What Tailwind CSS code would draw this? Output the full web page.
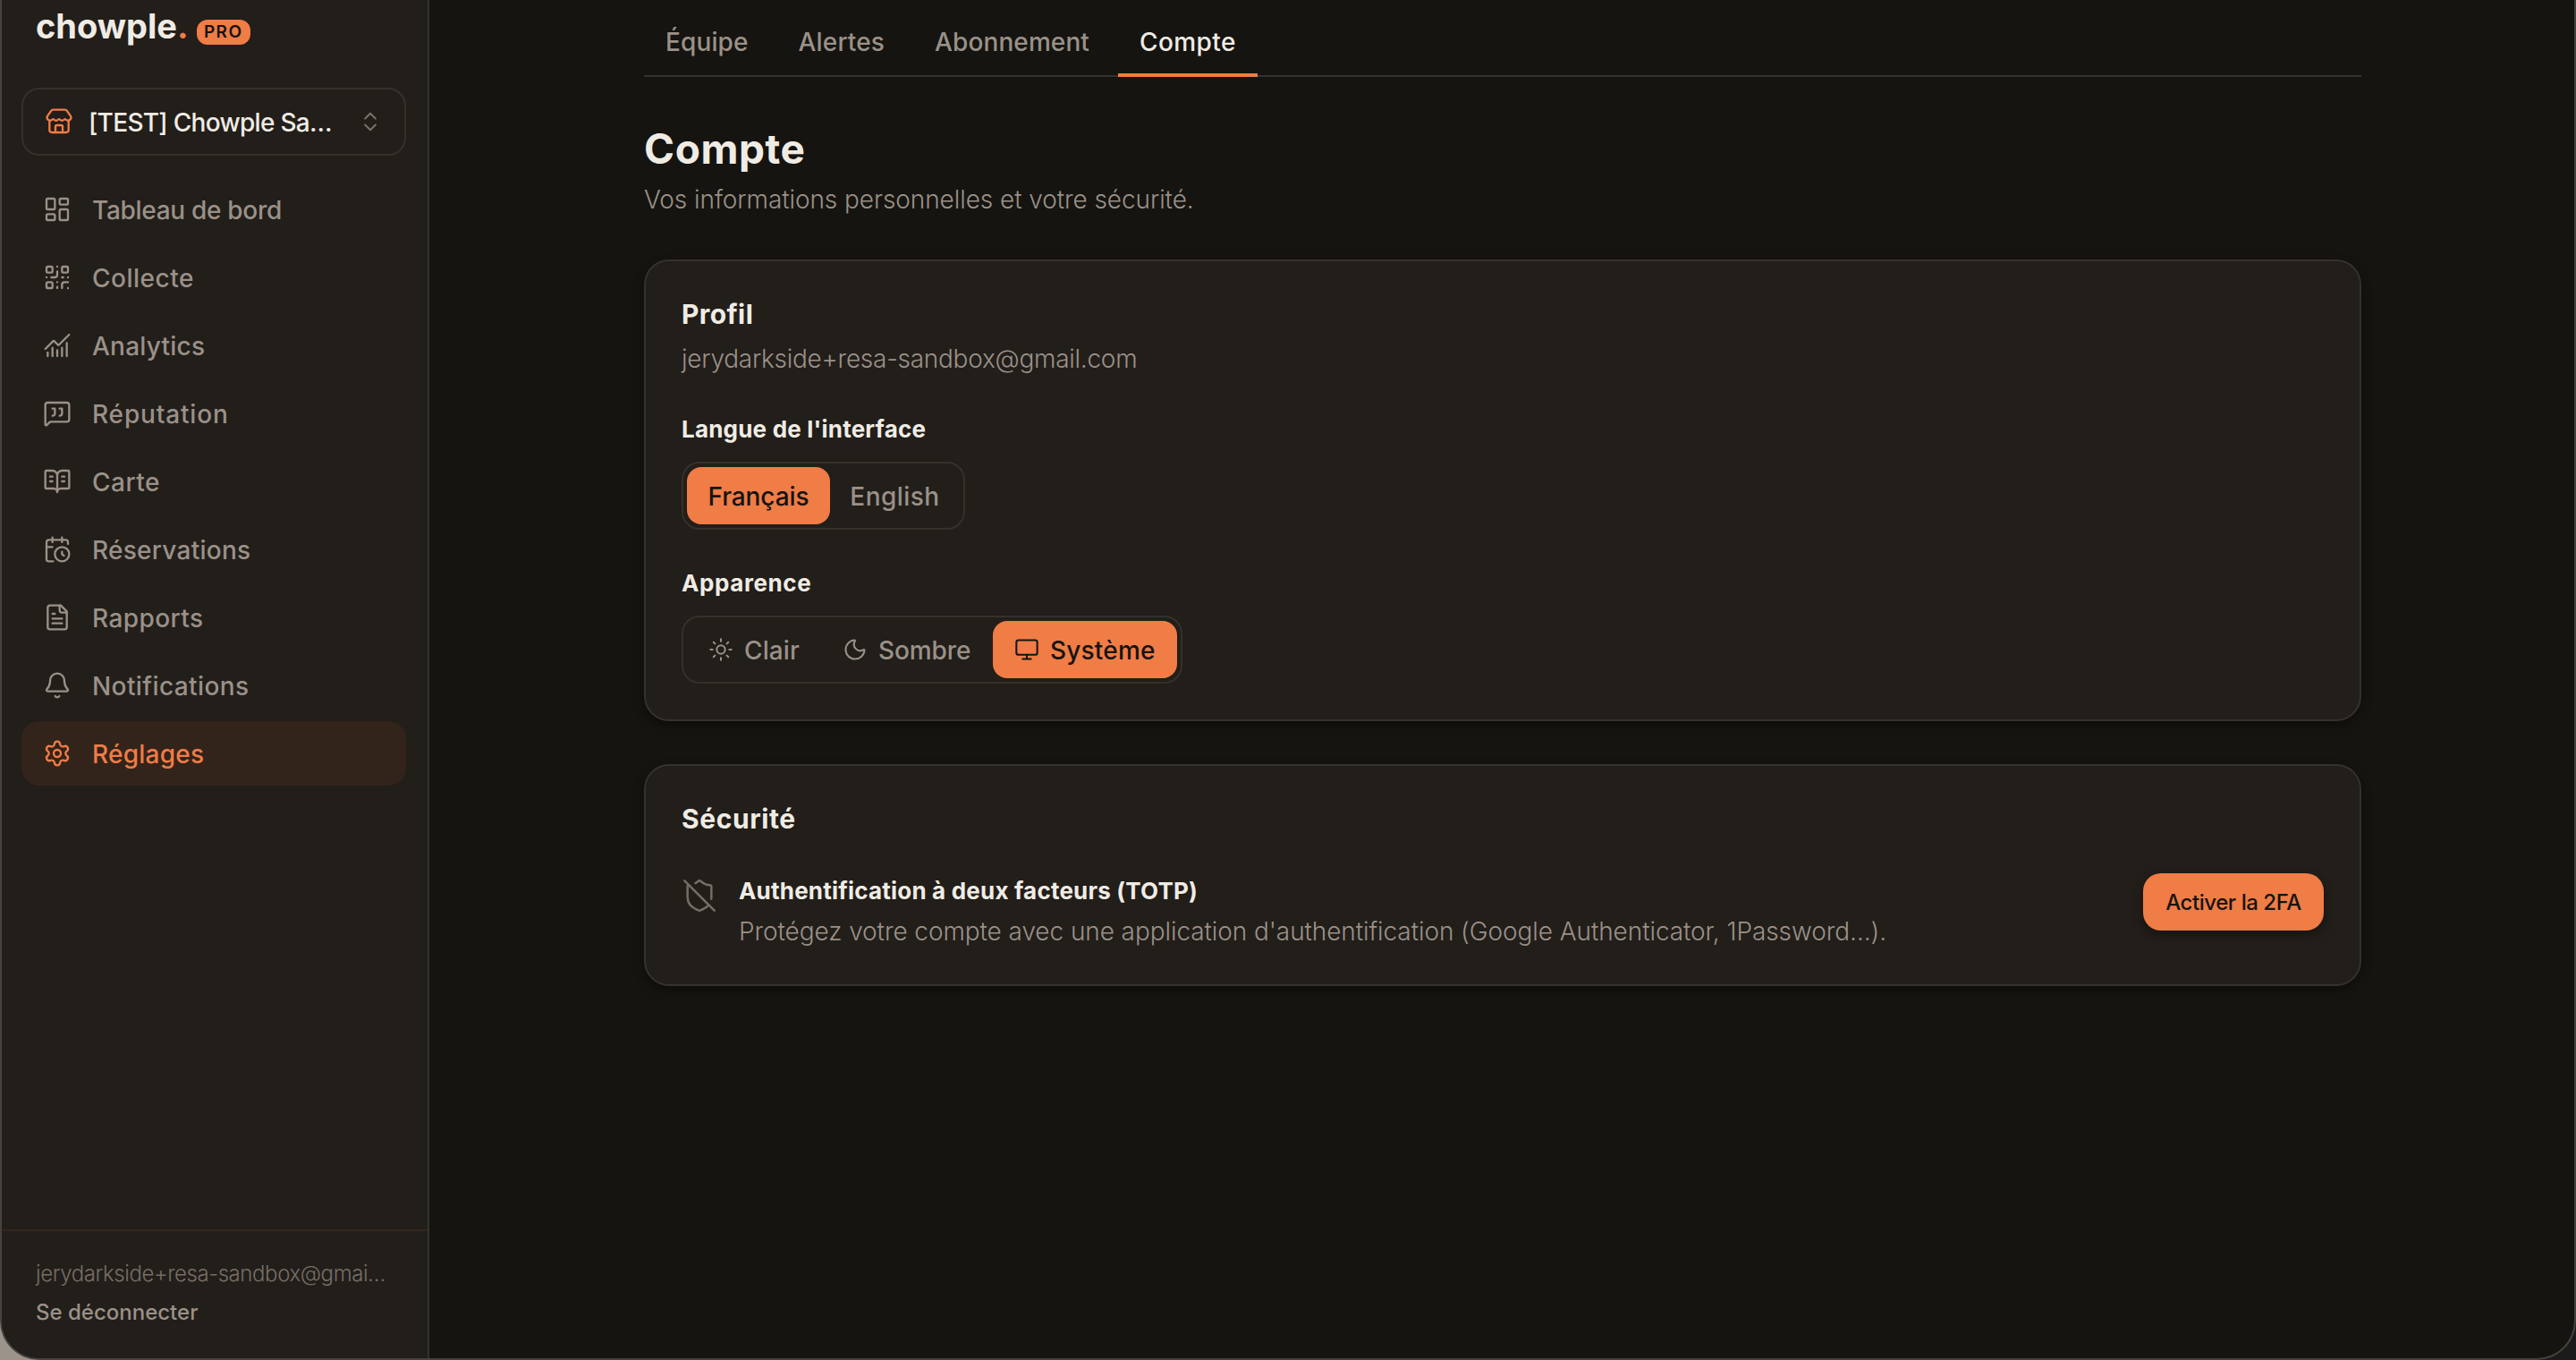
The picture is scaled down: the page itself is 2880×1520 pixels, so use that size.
<!DOCTYPE html>
<html lang="fr">
<head>
<meta charset="utf-8">
<title>Chowple Pro – Compte</title>
<script src="https://cdn.jsdelivr.net/npm/@tailwindcss/browser@4"></script>
</head>
<body class="h-[1520px] w-[2880px] overflow-hidden bg-linear-to-r from-[#9c948b] from-50% to-[#1b1b1c] to-50% font-['Inter',sans-serif] text-[28px] leading-[40px] font-medium text-[#9a9188]">
<div class="flex h-full overflow-hidden rounded-b-[44px] border-x-2 border-b-2 border-[#45423d] bg-[#151410]">

  <aside class="flex w-[478px] shrink-0 flex-col border-r-2 border-[#35322d] bg-[#221e1a]">
    <div class="flex h-[98px] pl-[38px]">
      <div class="mt-[5px] h-[48px] text-[38px] leading-[48px] font-bold text-[#f0ece4]">chowple<span class="text-[#f07c46]">.</span></div>
      <div class="mt-[22px] ml-[9px] flex h-[28px] w-[60px] items-center justify-center rounded-[12px] bg-[#f07c46] text-[19px] font-semibold text-[#151410]"><span class="tracking-[1.4px]">PRO</span></div>
    </div>
    <div class="mr-[24px] ml-[22px] flex h-[76px] items-center rounded-[20px] border-2 border-[#36302b] pr-[24px] pl-[24px]">
      <svg class="size-[32px]" viewBox="0 0 24 24" fill="none" stroke="#f07c46" stroke-width="1.75" stroke-linecap="round" stroke-linejoin="round"><path d="M15 21v-5a1 1 0 0 0-1-1h-4a1 1 0 0 0-1 1v5"/><path d="M17.774 10.31a1.12 1.12 0 0 0-1.549 0 2.5 2.5 0 0 1-3.451 0 1.12 1.12 0 0 0-1.548 0 2.5 2.5 0 0 1-3.452 0 1.12 1.12 0 0 0-1.549 0 2.5 2.5 0 0 1-3.77-3.248l2.889-4.184A2 2 0 0 1 7 2h10a2 2 0 0 1 1.653.873l2.895 4.192a2.5 2.5 0 0 1-3.774 3.244"/><path d="M4 10.95V19a2 2 0 0 0 2 2h12a2 2 0 0 0 2-2v-8.05"/></svg>
      <span class="ml-[17px] pt-[2px] tracking-[-0.7px] whitespace-nowrap text-[#f0ece4]">[TEST] Chowple Sa…</span>
      <svg class="ml-auto size-[28px] shrink-0" viewBox="0 0 24 24" fill="none" stroke="#7a7268" stroke-width="1.75" stroke-linecap="round" stroke-linejoin="round"><path d="m7 15 5 5 5-5"/><path d="m7 9 5-5 5 5"/></svg>
    </div>
    <nav class="mt-[24px] mr-[24px] ml-[22px] flex flex-col gap-1 [&_span]:-ml-px [&_span]:pt-[2px] [&_svg]:size-[32px] [&>a]:flex [&>a]:h-[72px] [&>a]:items-center [&>a]:gap-6 [&>a]:rounded-[20px] [&>a]:px-6">
      <a><svg viewBox="0 0 24 24" fill="none" stroke="currentColor" stroke-width="1.75" stroke-linecap="round" stroke-linejoin="round"><rect width="7" height="9" x="3" y="3" rx="1"/><rect width="7" height="5" x="14" y="3" rx="1"/><rect width="7" height="9" x="14" y="12" rx="1"/><rect width="7" height="5" x="3" y="16" rx="1"/></svg><span class="tracking-[-0.3px]">Tableau de bord</span></a>
      <a><svg viewBox="0 0 24 24" fill="none" stroke="currentColor" stroke-width="1.75" stroke-linecap="round" stroke-linejoin="round"><rect width="5" height="5" x="3" y="3" rx="1"/><rect width="5" height="5" x="16" y="3" rx="1"/><rect width="5" height="5" x="3" y="16" rx="1"/><path d="M21 16h-3a2 2 0 0 0-2 2v3M21 21v.01M12 7v3a2 2 0 0 1-2 2H7M3 12h.01M12 3h.01M12 16v.01M16 12h1M21 12v.01M12 21v-1"/></svg><span class="tracking-[0.51px]">Collecte</span></a>
      <a><svg viewBox="0 0 24 24" fill="none" stroke="currentColor" stroke-width="1.75" stroke-linecap="round" stroke-linejoin="round"><path d="M12 16v5M16 14v7M20 10v11M4 18v3M8 14v7"/><path d="m22 3-8.646 8.646a.5.5 0 0 1-.708 0L9.354 8.354a.5.5 0 0 0-.707 0L2 15"/></svg><span class="tracking-[0.23px]">Analytics</span></a>
      <a><svg viewBox="0 0 24 24" fill="none" stroke="currentColor" stroke-width="1.75" stroke-linecap="round" stroke-linejoin="round"><path d="M14 14a2 2 0 0 0 2-2V8h-2"/><path d="M22 17a2 2 0 0 1-2 2H6.828a2 2 0 0 0-1.414.586l-2.202 2.202A.71.71 0 0 1 2 21.286V5a2 2 0 0 1 2-2h16a2 2 0 0 1 2 2z"/><path d="M8 14a2 2 0 0 0 2-2V8H8"/></svg><span class="tracking-[0.84px]">Réputation</span></a>
      <a><svg viewBox="0 0 24 24" fill="none" stroke="currentColor" stroke-width="1.75" stroke-linecap="round" stroke-linejoin="round"><path d="M12 7v14M16 12h2M16 8h2M6 12h2M6 8h2"/><path d="M3 18a1 1 0 0 1-1-1V4a1 1 0 0 1 1-1h5a4 4 0 0 1 4 4 4 4 0 0 1 4-4h5a1 1 0 0 1 1 1v13a1 1 0 0 1-1 1h-6a3 3 0 0 0-3 3 3 3 0 0 0-3-3z"/></svg><span class="tracking-[0.5px]">Carte</span></a>
      <a><svg viewBox="0 0 24 24" fill="none" stroke="currentColor" stroke-width="1.75" stroke-linecap="round" stroke-linejoin="round"><path d="M16 14v2.2l1.6 1M16 2v4M3 10h5M8 2v4"/><path d="M21 7.5V6a2 2 0 0 0-2-2H5a2 2 0 0 0-2 2v14a2 2 0 0 0 2 2h3.5"/><circle cx="16" cy="16" r="6"/></svg><span class="tracking-[0.26px]">Réservations</span></a>
      <a><svg viewBox="0 0 24 24" fill="none" stroke="currentColor" stroke-width="1.75" stroke-linecap="round" stroke-linejoin="round"><path d="M15 2H6a2 2 0 0 0-2 2v16a2 2 0 0 0 2 2h12a2 2 0 0 0 2-2V7Z"/><path d="M14 2v4a2 2 0 0 0 2 2h4M10 9H8M16 13H8M16 17H8"/></svg><span class="tracking-[0.42px]">Rapports</span></a>
      <a><svg viewBox="0 0 24 24" fill="none" stroke="currentColor" stroke-width="1.75" stroke-linecap="round" stroke-linejoin="round"><path d="M10.268 21a2 2 0 0 0 3.464 0"/><path d="M3.262 15.326A1 1 0 0 0 4 17h16a1 1 0 0 0 .74-1.673C19.41 13.956 18 12.499 18 8A6 6 0 0 0 6 8c0 4.499-1.411 5.956-2.738 7.326"/></svg><span class="tracking-[0.41px]">Notifications</span></a>
      <a class="bg-[#33241b] text-[#f07c46]"><svg viewBox="0 0 24 24" fill="none" stroke="currentColor" stroke-width="1.75" stroke-linecap="round" stroke-linejoin="round"><path d="M9.671 4.136a2.34 2.34 0 0 1 4.659 0 2.34 2.34 0 0 0 3.319 1.915 2.34 2.34 0 0 1 2.33 4.033 2.34 2.34 0 0 0 0 3.831 2.34 2.34 0 0 1-2.33 4.033 2.34 2.34 0 0 0-3.319 1.915 2.34 2.34 0 0 1-4.659 0 2.34 2.34 0 0 0-3.32-1.915 2.34 2.34 0 0 1-2.33-4.033 2.34 2.34 0 0 0 0-3.831A2.34 2.34 0 0 1 6.35 6.051a2.34 2.34 0 0 0 3.319-1.915"/><circle cx="12" cy="12" r="3"/></svg><span class="tracking-[0.24px]">Réglages</span></a>
    </nav>
    <div class="mt-auto h-[144px] border-t-2 border-[#35251f] pt-[30px] pl-[38px] text-[24px] leading-[36px]">
      <div class="font-light tracking-[-0.42px] whitespace-nowrap text-[#766e65]">jerydarkside+resa-sandbox@gmai…</div>
      <div class="mt-[7px]">Se déconnecter</div>
    </div>
  </aside>

  <main class="flex-1 pl-[240px]">
   <div class="w-[1920px]">
    <nav class="flex h-[86px] items-end gap-2 border-b-2 border-[#35322d] [&>a]:-mb-[2px] [&>a]:flex [&>a]:h-[78px] [&>a]:items-center [&>a]:border-b-4 [&>a]:px-6 [&>a]:pt-1">
      <a class="border-transparent"><span class="tracking-[0.12px]">Équipe</span></a>
      <a class="border-transparent"><span class="tracking-[0.15px]">Alertes</span></a>
      <a class="border-transparent"><span class="tracking-[0.1px]">Abonnement</span></a>
      <a class="border-[#f07c46] text-[#f0ece4]"><span class="tracking-[0.42px]">Compte</span></a>
    </nav>
    <h1 class="mt-[54px] h-[52px] text-[46px] leading-[52px] font-bold tracking-[0.6px] text-[#f0ece4]">Compte</h1>
    <p class="mt-[11px] font-light tracking-[-0.08px]">Vos informations personnelles et votre sécurité.</p>

    <section class="mt-[47px] h-[516px] rounded-[28px] border-2 border-[#36312c] bg-[#221e1a] p-10 shadow-[0_4px_12px_rgba(0,0,0,0.4)]">
      <h2 class="text-[30px] leading-[38px] font-bold tracking-[0.4px] text-[#f0ece4]">Profil</h2>
      <p class="mt-[11px] font-light tracking-[-0.27px]">jerydarkside+resa-sandbox@gmail.com</p>
      <h3 class="mt-[41px] text-[26px] leading-[36px] font-bold tracking-[0.2px] text-[#f0ece4]">Langue de l'interface</h3>
      <div class="mt-[18px] flex h-[76px] w-[317px] rounded-[20px] border-2 border-[#36302b] p-1 [&_span]:pt-[2px]">
        <div class="flex w-[160px] items-center justify-center rounded-[16px] bg-[#f07c46] text-[#151410]"><span class="tracking-[-0.09px]">Français</span></div>
        <div class="flex flex-1 items-center justify-center"><span class="tracking-[0.46px]">English</span></div>
      </div>
      <h3 class="mt-[42px] text-[26px] leading-[36px] font-bold tracking-[0.6px] text-[#f0ece4]">Apparence</h3>
      <div class="mt-[18px] flex h-[76px] w-[560px] rounded-[20px] border-2 border-[#36302b] p-1 [&_span]:pt-[2px] [&_svg]:size-[28px] [&_svg]:shrink-0 [&>div]:flex [&>div]:items-center [&>div]:gap-3 [&>div]:pl-6">
        <div class="w-[150px]"><svg viewBox="0 0 24 24" fill="none" stroke="currentColor" stroke-width="1.75" stroke-linecap="round" stroke-linejoin="round"><circle cx="12" cy="12" r="4"/><path d="M12 2v2M12 20v2M4.93 4.93l1.41 1.41M17.66 17.66l1.41 1.41M2 12h2M20 12h2M6.34 17.66l-1.41 1.41M19.07 4.93l-1.41 1.41"/></svg><span class="tracking-[0.11px]">Clair</span></div>
        <div class="w-[192px]"><svg viewBox="0 0 24 24" fill="none" stroke="currentColor" stroke-width="1.75" stroke-linecap="round" stroke-linejoin="round"><path d="M20.985 12.486a9 9 0 1 1-9.473-9.472c.405-.022.617.46.402.803a6 6 0 0 0 8.268 8.268c.344-.215.825-.004.803.401"/></svg><span class="tracking-[-0.09px]">Sombre</span></div>
        <div class="flex-1 rounded-[16px] bg-[#f07c46] text-[#151410]"><svg viewBox="0 0 24 24" fill="none" stroke="currentColor" stroke-width="1.75" stroke-linecap="round" stroke-linejoin="round"><rect width="20" height="14" x="2" y="3" rx="2"/><path d="M8 21h8M12 17v4"/></svg><span class="tracking-[0.19px]">Système</span></div>
      </div>
    </section>

    <section class="mt-[48px] h-[248px] rounded-[28px] border-2 border-[#36312c] bg-[#221e1a] p-10 shadow-[0_4px_12px_rgba(0,0,0,0.4)]">
      <h2 class="text-[30px] leading-[38px] font-bold tracking-[0.6px] text-[#f0ece4]">Sécurité</h2>
      <div class="mt-[42px] flex items-start">
        <svg class="mt-[5px] size-[40px]" viewBox="0 0 24 24" fill="none" stroke="#766e65" stroke-width="1.5" stroke-linecap="round" stroke-linejoin="round"><path d="m2 2 20 20"/><path d="M5 5a1 1 0 0 0-1 1v7c0 5 3.5 7.5 7.67 8.94a1 1 0 0 0 .67.01c2.35-.82 4.48-1.97 5.9-3.71"/><path d="M9.309 3.652A12.252 12.252 0 0 0 11.24 2.28a1.17 1.17 0 0 1 1.52 0C14.51 3.81 17 5 19 5a1 1 0 0 1 1 1v7a9.784 9.784 0 0 1-.08 1.264"/></svg>
        <div class="ml-6 pt-[2px]">
          <h3 class="text-[26px] leading-[36px] font-bold tracking-[0.2px] text-[#f0ece4]">Authentification à deux facteurs (TOTP)</h3>
          <p class="mt-[7px] font-light tracking-[-0.08px]">Protégez votre compte avec une application d'authentification (Google Authenticator, 1Password…).</p>
        </div>
        <div class="ml-auto flex h-[64px] w-[202px] items-center justify-center rounded-[20px] bg-[#f07c46] text-[24px] text-[#151410] shadow-[0_4px_12px_rgba(0,0,0,0.4)]"><span class="pt-[2px] tracking-[-0.45px]">Activer la 2FA</span></div>
      </div>
    </section>
   </div>
  </main>
</div>
</body>
</html>
